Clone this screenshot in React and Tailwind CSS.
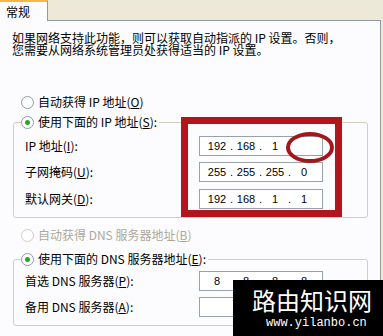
import React from 'react';

const cjk = { fontFamily: '"Noto Sans CJK SC", "Liberation Sans", sans-serif' };

const Radio = ({ checked, disabled, children }) => (
  <div className={`flex items-center h-[16px] ${disabled ? 'text-[#aca899]' : 'text-black'}`}>
    <span
      className={`w-[13px] h-[13px] rounded-full border flex items-center justify-center bg-white ${
        disabled ? 'border-[#cfcdc3]' : 'border-[#8b9cb0]'
      }`}
    >
      {checked && <span className="w-[5px] h-[5px] rounded-full bg-[#2aa52a]" />}
    </span>
    <span className="ml-[4px] whitespace-nowrap">{children}</span>
  </div>
);

const IpBox = ({ parts, dots = true }) => (
  <div
    className="w-[124px] h-[20px] border border-[#98a2ad] bg-white flex items-center pl-[5px] text-[11px] text-black"
    style={{ fontFamily: '"Liberation Sans", sans-serif' }}
  >
    {parts.map((p, i) => (
      <React.Fragment key={i}>
        <span className="w-[24px] text-center">{p}</span>
        {i < 3 && <span className="w-[5px] text-center">{dots ? '.' : ''}</span>}
      </React.Fragment>
    ))}
  </div>
);

const Row = ({ label, children }) => (
  <div className="flex items-center justify-between h-[20px]">
    <span className="whitespace-nowrap">{label}</span>
    {children}
  </div>
);

export default function App() {
  return (
    <div className="w-[383px] h-[336px] bg-[#ece9d8] relative overflow-hidden text-[12px] leading-[12px]" style={cjk}>
      {/* tab */}
      <div className="h-[21px] flex">
        <div className="w-[48px] h-[21px] bg-[#fcfcfe] border-t-2 border-[#f2b94a] border-r border-r-[#919b9c] relative z-10 pl-[6px] pt-[4px] text-black">
          常规
        </div>
      </div>

      {/* panel */}
      <div className="-mt-px mr-[2px] h-[316px] bg-[#fcfcfe] border-t border-r border-[#919b9c] pt-[11px] text-black">
        <div className="pl-[12px] leading-[12px]">
          <p className="whitespace-nowrap">如果网络支持此功能，则可以获取自动指派的 IP 设置。否则，</p>
          <p className="whitespace-nowrap">您需要从网络系统管理员处获得适当的 IP 设置。</p>
        </div>

        <div className="pl-[21px] mt-[38px]">
          <Radio>
            自动获得 IP 地址(<u>O</u>)
          </Radio>
        </div>

        <fieldset className="ml-[13px] w-[355px] mt-[4px] border border-[#d0d0bf] rounded-[3px] p-0">
          <legend className="ml-[7px] pr-[2px] bg-[#fcfcfe]">
            <Radio checked>
              使用下面的 IP 地址(<u>S</u>):
            </Radio>
          </legend>
          <div className="pl-[11px] pr-[44px] pt-[6px] pb-[8px] flex flex-col gap-[6px]">
            <Row label={<>IP 地址(<u>I</u>):</>}>
              <IpBox parts={['192', '168', '1', '']} />
            </Row>
            <Row label={<>子网掩码(<u>U</u>):</>}>
              <IpBox parts={['255', '255', '255', '0']} />
            </Row>
            <div className="mt-px">
              <Row label={<>默认网关(<u>D</u>):</>}>
                <IpBox parts={['192', '168', '1', '1']} />
              </Row>
            </div>
          </div>
        </fieldset>

        <div className="pl-[21px] mt-[9px]">
          <Radio disabled>
            自动获得 DNS 服务器地址(<u>B</u>)
          </Radio>
        </div>

        <fieldset className="ml-[13px] w-[355px] mt-[8px] border border-[#d0d0bf] rounded-[3px] p-0">
          <legend className="ml-[7px] pr-[2px] bg-[#fcfcfe]">
            <Radio checked>
              使用下面的 DNS 服务器地址(<u>E</u>):
            </Radio>
          </legend>
          <div className="pl-[11px] pr-[44px] pt-[4px] pb-[8px] flex flex-col gap-[6px]">
            <Row label={<>首选 DNS 服务器(<u>P</u>):</>}>
              <IpBox parts={['8', '8', '8', '8']} dots={false} />
            </Row>
            <Row label={<>备用 DNS 服务器(<u>A</u>):</>}>
              <IpBox parts={['', '', '', '']} dots={false} />
            </Row>
          </div>
        </fieldset>
      </div>

      {/* red annotations */}
      <div className="absolute left-[181px] top-[117px] w-[161px] h-[100px] border-[7px] border-[#b2161d]" />
      <div className="absolute left-[286px] top-[132px] w-[48px] h-[31px] rounded-[50%] border-4 border-[#a3161c]" />

      {/* watermark */}
      <div className="absolute right-0 bottom-0 w-[150px] h-[56px] bg-black text-white">
        <div className="pl-[19px] pt-[7px] text-[24px] leading-[26px] whitespace-nowrap" style={cjk}>
          路由知识网
        </div>
        <div
          className="pl-[33px] mt-[3px] text-[12px] leading-[14px] whitespace-nowrap"
          style={{ fontFamily: '"Liberation Mono", monospace' }}
        >
          www.yilanbo.cn
        </div>
      </div>
    </div>
  );
}
